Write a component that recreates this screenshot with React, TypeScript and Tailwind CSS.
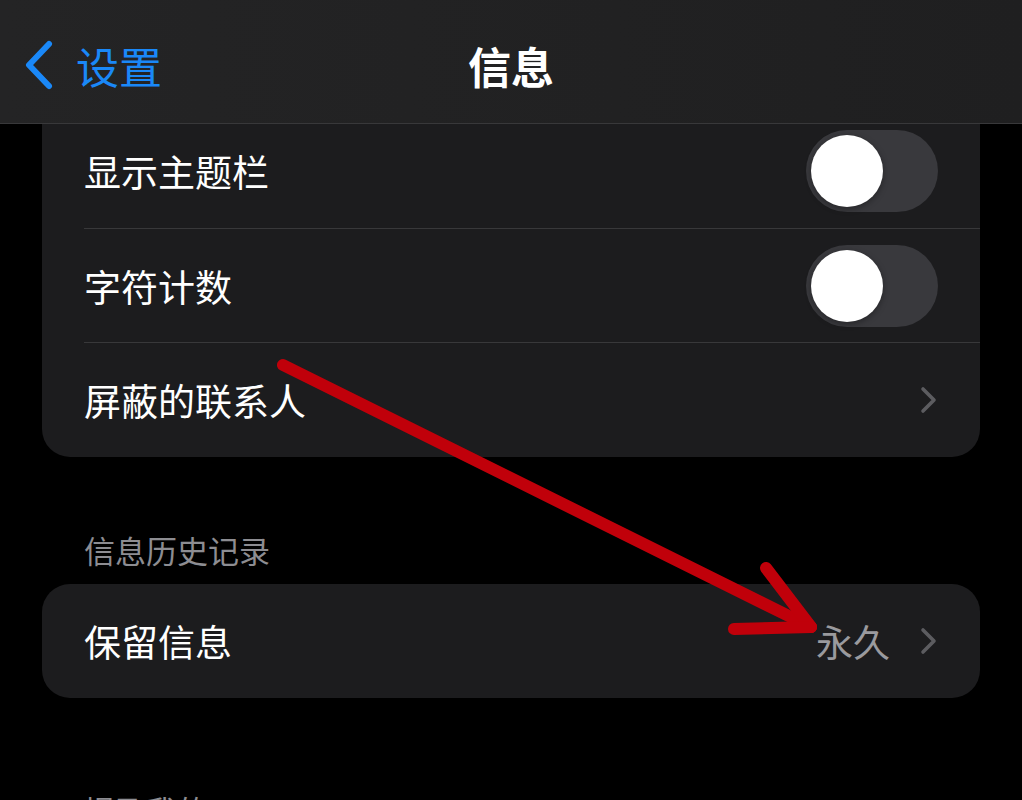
import React from "react";

function Toggle() {
  return (
    <div className="w-[132px] h-[82px] rounded-full bg-[#39393d] p-[5px] flex items-center">
      <div className="w-[72px] h-[72px] rounded-full bg-white shadow-[0_2px_6px_rgba(0,0,0,0.35)]" />
    </div>
  );
}

function Chevron() {
  return (
    <svg width="18" height="28" viewBox="0 0 18 28" className="shrink-0">
      <path d="M3 3 L14 14 L3 25" fill="none" stroke="#5c5c60" strokeWidth="3.6" strokeLinecap="round" strokeLinejoin="round" />
    </svg>
  );
}

export default function App() {
  return (
    <div
      className="relative w-[1022px] h-[800px] overflow-hidden bg-black text-white"
      style={{ fontFamily: '"Noto Sans CJK SC", "Noto Sans", sans-serif' }}
    >
      {/* Nav bar */}
      <div className="h-[124px] bg-gradient-to-r from-[#242425] to-[#1f1f20] border-b border-[#38383a] grid grid-cols-[1fr_auto_1fr] items-center pt-[6px]">
        <div className="flex items-center pl-[22px]">
          <svg width="34" height="52" viewBox="0 0 34 52">
            <path d="M27 5 L7 26 L27 47" fill="none" stroke="#1a88f8" strokeWidth="6" strokeLinecap="round" strokeLinejoin="round" />
          </svg>
          <span className="ml-[20px] text-[43px] leading-[52px] text-[#1a88f8]">设置</span>
        </div>
        <div className="text-[43px] leading-[52px] font-bold text-white">信息</div>
        <div />
      </div>

      {/* Card 1 */}
      <div className="ml-[42px] w-[938px] bg-[#1c1c1e] rounded-b-[28px]">
        <div className="h-[104px] flex items-center justify-between pl-[42px] pr-[42px] pb-[10px]">
          <span className="text-[37px] leading-[48px]">显示主题栏</span>
          <Toggle />
        </div>
        <div className="ml-[42px] h-px bg-[#38383a]" />
        <div className="h-[113px] flex items-center justify-between pl-[42px] pr-[42px]">
          <span className="text-[37px] leading-[48px]">字符计数</span>
          <Toggle />
        </div>
        <div className="ml-[42px] h-px bg-[#38383a]" />
        <div className="h-[114px] flex items-center justify-between pl-[42px] pr-[42px]">
          <span className="text-[37px] leading-[48px]">屏蔽的联系人</span>
          <Chevron />
        </div>
      </div>

      {/* Section header */}
      <div className="h-[127px] flex items-end pl-[84px] pb-[14px]">
        <span className="text-[31px] leading-[40px] text-[#8d8d92]">信息历史记录</span>
      </div>

      {/* Card 2 */}
      <div className="ml-[42px] w-[938px] h-[114px] bg-[#1c1c1e] rounded-[28px] flex items-center justify-between pl-[42px] pr-[42px]">
        <span className="text-[37px] leading-[48px]">保留信息</span>
        <div className="flex items-center gap-[30px]">
          <span className="text-[37px] leading-[48px] text-[#9a9a9e]">永久</span>
          <Chevron />
        </div>
      </div>

      {/* Next section header (cut off by the screen edge) */}
      <div className="pl-[84px] pt-[92px]">
        <span className="text-[31px] leading-[40px] text-[#8d8d92]">提及我的</span>
      </div>

      {/* Red annotation arrow */}
      <svg className="absolute inset-0 pointer-events-none" width="1022" height="800" viewBox="0 0 1022 800">
        <g stroke="#c0000a" strokeWidth="12" strokeLinecap="round" fill="none">
          <line x1="283" y1="365" x2="811" y2="627" />
          <line x1="766" y1="568" x2="811" y2="627" />
          <line x1="734" y1="629" x2="811" y2="627" />
        </g>
      </svg>
    </div>
  );
}
